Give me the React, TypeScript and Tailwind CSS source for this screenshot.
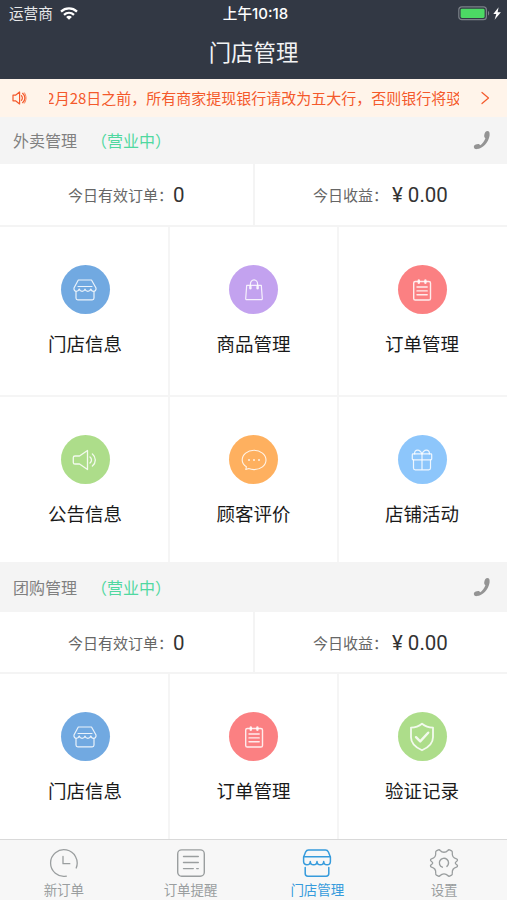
import type { ReactNode } from "react";

const line = {
  fill: "none",
  stroke: "currentColor",
  strokeLinecap: "round" as const,
  strokeLinejoin: "round" as const,
};

function WifiIcon() {
  return (
    <svg className="ml-[7px] h-[13px] w-[18px]" viewBox="0 0 18 13">
      <g fill="none" stroke="#fff" strokeWidth="2.3">
        <path d="M1 4.6C5.6.4 12.4.4 17 4.6" />
        <path d="M4 7.8c2.9-2.6 7.1-2.6 10 0" />
      </g>
      <path d="M9 12.8 6.1 9.9c1.6-1.5 4.2-1.5 5.8 0z" fill="#fff" />
    </svg>
  );
}

function BatteryIcon() {
  return (
    <svg className="h-[15px] w-[44px]" viewBox="0 0 44 15">
      <rect x=".8" y=".9" width="27.6" height="12.8" rx="3" fill="none" stroke="#7b8088" strokeWidth="1.2" />
      <rect x="2.6" y="2.7" width="24" height="9.2" rx="1.4" fill="#4cd964" />
      <path d="M30 5v4.6c1.6-.6 1.600-4 0-4.6z" fill="#7b8088" />
      <path d="M40.600 1.200 35.300 8.100h3l-1.700 5.700L42.900 6.300h-3.300z" fill="#fff" />
    </svg>
  );
}

function HornIcon() {
  return (
    <svg className="h-[14px] w-[15px]" viewBox="0 0 15 14" {...line} strokeWidth="1.2">
      <path d="M1 4.200h2.500L7.600 1v12L3.500 9.800H1z" />
      <path d="M9.400 4.600c1.300 1.300 1.300 3.500 0 4.800M10.600 2.300c3 2.500 3 6.900 0 9.400" />
      <path d="M12.400 1.800c2.200 3.200 2.200 7.200 0 10.400" strokeWidth=".8" />
    </svg>
  );
}

function PhoneIcon() {
  return (
    <svg className="h-[20px] w-[18px]" viewBox="0 0 18 20">
      <path
        d="M12.400 2c.8-1.100 2.600-1.400 3.500-.5.700.7.900 2.600.6 4.600-.5 3-2.200 6.400-4.700 8.900-2.200 2.200-5 3.800-8 4.100-1.400.2-2.700-.6-2.900-1.900-.2-1.200.6-2.100 1.800-2.600 1.300-.6 2.900-.9 3.800-.2l.8.8c2-1.200 4.200-4.200 5.100-7l-.8-.8c-.9-.9-.2-4 .8-5.400z"
        fill="#949494"
      />
    </svg>
  );
}

function StoreIcon() {
  return (
    <svg className="h-[24px] w-[24px]" viewBox="0 0 24 24" {...line} strokeWidth="1.200">
      <path d="M5.300 2h13.200L23 10c.3 1.900-.8 3.300-2.300 3.300-1.300 0-2.500-.8-2.900-2.300-.4 1.500-1.700 2.300-2.900 2.300S12.300 12.500 12 11c-.3 1.500-1.600 2.300-2.900 2.300S6.600 12.500 6.200 11c-.4 1.500-1.500 2.300-2.900 2.300C1.800 13.300.7 11.900 1 10z" />
      <path d="M5 8.500h14M3 14v6c0 1.100.7 1.800 1.800 1.800h14.400c1.100 0 1.800-.7 1.800-1.800v-6" />
    </svg>
  );
}

function BagIcon() {
  return (
    <svg className="h-[24px] w-[24px]" viewBox="0 0 24 24" {...line} strokeWidth="1.200">
      <path d="M4.700 7.300h14.600l1 13.200c.1.800-.3 1.200-1 1.200H4.700c-.7 0-1.100-.4-1-1.200z" />
      <path d="M8.400 10.700V6.200c0-2.300 1.500-4.300 3.600-4.300s3.600 2 3.600 4.300v4.500" />
      <path d="M7.500 8.500v2.300h1.800V8.500M14.700 8.500v2.300h1.800V8.500" strokeWidth=".8" />
    </svg>
  );
}

function OrderIcon() {
  return (
    <svg className="h-[24px] w-[24px]" viewBox="0 0 24 24" {...line} strokeWidth="1.400">
      <rect x="3.700" y="3.500" width="16.800" height="18.500" rx="1.600" />
      <path d="M7 9h10.200M7 12.900h10.200M7 16.800h10.200" />
      <path d="M8.800 2.500v2.200M15.400 2.500v2.200" strokeWidth="2.400" />
    </svg>
  );
}

function SpeakerIcon() {
  return (
    <svg className="h-[26px] w-[26px]" viewBox="0 0 26 26" {...line} strokeWidth="1.300">
      <path d="M3 9h4.500L15.500 3.500v19L7.500 17H3c-1.100 0-1.700-.6-1.700-1.600v-4.800C1.300 9.600 1.900 9 3 9z" />
      <path d="M18 10c2 1.700 2 4.300 0 6M20.400 7c3.900 3.300 3.900 8.700 0 12" />
    </svg>
  );
}

function CommentIcon() {
  return (
    <svg className="h-[26px] w-[26px]" viewBox="0 0 26 26" {...line} strokeWidth="1.100">
      <path d="M5.400 19.700C2.700 18 1.200 15.700 1.200 13 1.200 7.500 6.500 3.300 13 3.300S25 7.500 25 13s-5.500 9.600-12 9.600c-2 0-3.700-.4-5.300-1.100l-2.900 1z" />
      <path d="M8 13h.01M13 13h.01M18 13h.01" strokeWidth="1.900" />
    </svg>
  );
}

function GiftIcon() {
  return (
    <svg className="h-[24px] w-[24px]" viewBox="0 0 24 24" {...line} strokeWidth="1.200">
      <rect x="2.300" y="5.900" width="19.400" height="5.900" rx=".8" />
      <path d="M3.500 11.800V20c0 1.200.7 1.800 1.800 1.800h13.400c1.100 0 1.800-.6 1.800-1.800v-8.200M12 6v15.500" />
      <path d="M4.700 6C4.200 3.700 5.700 2 7.700 2.100 9.800 2.200 11.200 4 12 6c.8-2 2.200-3.800 4.300-3.900 2-.1 3.500 1.600 3 3.900" />
    </svg>
  );
}

function ShieldIcon() {
  return (
    <svg className="h-[30px] w-[26px]" viewBox="0 0 26 30" {...line} strokeWidth="1.800">
      <path d="M13 1.700c3.200 2.600 6.900 3.800 11 3.900v9.600c0 5.500-4.200 10-11 13.100C6.200 25.200 2 20.700 2 15.200V5.600c4.100-.1 7.800-1.300 11-3.900z" />
      <path d="m7 15.200 4.200 4.200 8-8.700" strokeWidth="2.400" />
    </svg>
  );
}

function ClockTab() {
  return (
    <svg className="h-[30px] w-[30px]" viewBox="0 0 30 30" {...line} strokeWidth="1.300">
      <path d="M17.300 28.100A13.300 13.300 0 1 1 27.200 20" />
      <path d="M14 8.500v7.200h6.800" />
    </svg>
  );
}

function ListTab() {
  return (
    <svg className="h-[30px] w-[30px]" viewBox="0 0 30 30" {...line} strokeWidth="1.400">
      <rect x="1.700" y="1.900" width="26.600" height="26.400" rx="4" />
      <path d="M7.500 8.500h14.800M7.500 14.500h14.800M7.500 20.600h9.800M20.700 20.600h1.600" />
    </svg>
  );
}

function StoreTab() {
  return (
    <svg className="h-[30px] w-[30px]" viewBox="0 0 30 30" {...line} strokeWidth="1.500">
      <path d="M6.500 2h17c1.500 0 2.300.7 2.900 2l2 5v4.500c0 2-1.500 3.300-3.300 3.300s-3.400-1.300-3.400-3.300c0 2-1.500 3.300-3.300 3.300S15 15.500 15 13.500c0 2-1.500 3.300-3.400 3.300s-3.300-1.300-3.300-3.300c0 2-1.500 3.300-3.400 3.300s-3.300-1.300-3.300-3.300V9l2-5C4.200 2.700 5 2 6.500 2z" />
      <path d="M2 8.700h26M3.200 19.500v6c0 1.800 1 2.700 2.700 2.700h18.200c1.700 0 2.700-.9 2.700-2.700v-6" />
    </svg>
  );
}

function GearTab() {
  return (
    <svg className="h-[30px] w-[30px]" viewBox="0 0 30 30" {...line} strokeWidth="1.300">
      <path d="M9.400 1.900c.7-.3 1.300-.1 1.800.6 2 2.300 5.600 2.300 7.600 0 .5-.7 1.100-.9 1.800-.6l2 1c.6.300.8.900.7 1.700-.3 3 1.300 5.500 4.200 6.200.8.200 1.100.7 1 1.500-.1 1-2.200 1.400-2.200 2.700s2.100 1.700 2.200 2.700c.1.800-.2 1.300-1 1.500-2.900.7-4.500 3.200-4.200 6.200.1.800-.1 1.400-.7 1.700l-2 1c-.7.300-1.300.1-1.800-.6-2-2.300-5.600-2.300-7.600 0-.5.700-1.100.9-1.800.6l-2-1c-.6-.3-.8-.9-.7-1.700.3-3-1.300-5.500-4.200-6.200-.8-.2-1.100-.7-1-1.500.1-1 2.200-1.400 2.200-2.700s-2.100-1.700-2.200-2.700c-.1-.8.200-1.300 1-1.500 2.900-.7 4.500-3.200 4.200-6.200-.1-.8.100-1.400.7-1.700z" />
      <path d="M13.400 19.200a4.600 4.600 0 1 1 4.500-.8" strokeWidth="1.400" />
    </svg>
  );
}

function SectionHeader({ title, className }: { title: string; className: string }) {
  return (
    <div className={`flex items-center bg-[#f4f4f4] pr-[16px] pl-[13px] text-[16px] leading-[24px] ${className}`}>
      <span className="text-[#808080]">{title}</span>
      <span className="ml-[14px] text-[#50d8a0]">（营业中）</span>
      <span className="ml-auto">
        <PhoneIcon />
      </span>
    </div>
  );
}

function Stats({ className }: { className: string }) {
  return (
    <div className={`grid grid-cols-[253px_252px] gap-[2px] border-[#f4f4f4] bg-[#f4f4f4] text-[15px] text-[#666] ${className}`}>
      <div className="flex h-full items-center bg-white pt-[2px] pl-[68px]">
        <span className="w-[105px] whitespace-nowrap">今日有效订单：</span>
        <span className="font-['Roboto'] text-[20.500px] text-[#333]">0</span>
      </div>
      <div className="flex h-full items-center bg-white pt-[2px] pl-[58px]">
        <span className="w-[79px] whitespace-nowrap">今日收益：</span>
        <span className="font-['Roboto'] text-[20.500px] whitespace-pre text-[#333]">¥ 0.00</span>
      </div>
    </div>
  );
}

type Entry = { label: string; color: string; icon: ReactNode };

function EntryRow({ items, className }: { items: Entry[]; className: string }) {
  return (
    <div className={`grid grid-cols-[168px_167px_168px] gap-[2px] bg-[#f5f5f5] ${className}`}>
      {items.map((item) => (
        <div
          key={item.label}
          className="flex flex-col items-center bg-white pt-[38px] first:pl-[2px] last:pr-[2px]"
        >
          <div className={`flex size-[49px] shrink-0 items-center justify-center rounded-full text-white/85 ${item.color}`}>
            {item.icon}
          </div>
          <div className="mt-[15px] text-[18.500px] leading-[28px] text-[#1a1a1a]">{item.label}</div>
        </div>
      ))}
    </div>
  );
}

const tabs = [
  { label: "新订单", icon: <ClockTab />, color: "text-[#9a9e9f]" },
  { label: "订单提醒", icon: <ListTab />, color: "text-[#9a9e9f]" },
  { label: "门店管理", icon: <StoreTab />, color: "text-[#369bdc]" },
  { label: "设置", icon: <GearTab />, color: "text-[#9a9e9f]" },
];

export default function App() {
  return (
    <div className="flex h-[900px] w-[507px] flex-col overflow-hidden bg-white font-['Noto_Sans_CJK_SC',sans-serif]">
      <header className="h-[79px] shrink-0 bg-[#323844] text-white">
        <div className="grid h-[26px] grid-cols-[1fr_auto_1fr] items-center pr-[5px] pl-[9px] text-[14.600px] leading-[22px]">
          <div className="flex items-center text-[#e8e9eb]">
            运营商
            <WifiIcon />
          </div>
          <div className="font-medium">
            上午<span className="font-['Inter'] text-[15px]">10:18</span>
          </div>
          <div className="flex justify-end">
            <BatteryIcon />
          </div>
        </div>
        <h1 className="pt-[8px] text-center text-[22.400px] leading-[34px] text-[#f2f3f4]">门店管理</h1>
      </header>

      <div className="flex h-[38px] shrink-0 items-center bg-[#fff4ea] pl-[12px] text-[#f4592b]">
        <HornIcon />
        <div className="ml-[22px] flex w-[410px] overflow-hidden text-[15px] leading-[24px] whitespace-nowrap">
          <span className="-ml-[11px]">12月28日之前，所有商家提现银行请改为五大行，否则银行将驳回</span>
        </div>
        <svg className="ml-[22px] h-[14px] w-[9px]" viewBox="0 0 9 14" {...line} strokeWidth="1.200">
          <path d="m1 1.500 6.500 5.500L1 12.500" />
        </svg>
      </div>

      <SectionHeader title="外卖管理" className="h-[47px] shrink-0 pb-[2px]" />
      <Stats className="h-[63px] shrink-0 border-b-2" />
      <EntryRow
        className="h-[168px] shrink-0"
        items={[
          { label: "门店信息", color: "bg-[#71a9e1]", icon: <StoreIcon /> },
          { label: "商品管理", color: "bg-[#c3a2ef]", icon: <BagIcon /> },
          { label: "订单管理", color: "bg-[#fb8082]", icon: <OrderIcon /> },
        ]}
      />
      <EntryRow
        className="h-[167px] shrink-0 border-t-2 border-[#f5f5f5]"
        items={[
          { label: "公告信息", color: "bg-[#addd8a]", icon: <SpeakerIcon /> },
          { label: "顾客评价", color: "bg-[#feb05f]", icon: <CommentIcon /> },
          { label: "店铺活动", color: "bg-[#8dc6fb]", icon: <GiftIcon /> },
        ]}
      />

      <SectionHeader title="团购管理" className="h-[50px] shrink-0" />
      <Stats className="h-[62px] shrink-0 border-b-2" />
      <EntryRow
        className="h-[165px] shrink-0"
        items={[
          { label: "门店信息", color: "bg-[#71a9e1]", icon: <StoreIcon /> },
          { label: "订单管理", color: "bg-[#fb8082]", icon: <OrderIcon /> },
          { label: "验证记录", color: "bg-[#addd8a]", icon: <ShieldIcon /> },
        ]}
      />

      <nav className="grid h-[61px] shrink-0 grid-cols-4 border-t border-[#d9d9d9] bg-[#f7f7f7]">
        {tabs.map((tab) => (
          <div key={tab.label} className={`flex flex-col items-center pt-[8px] pl-px ${tab.color}`}>
            {tab.icon}
            <span className="mt-px text-[13.500px] leading-[20px]">{tab.label}</span>
          </div>
        ))}
      </nav>
    </div>
  );
}
